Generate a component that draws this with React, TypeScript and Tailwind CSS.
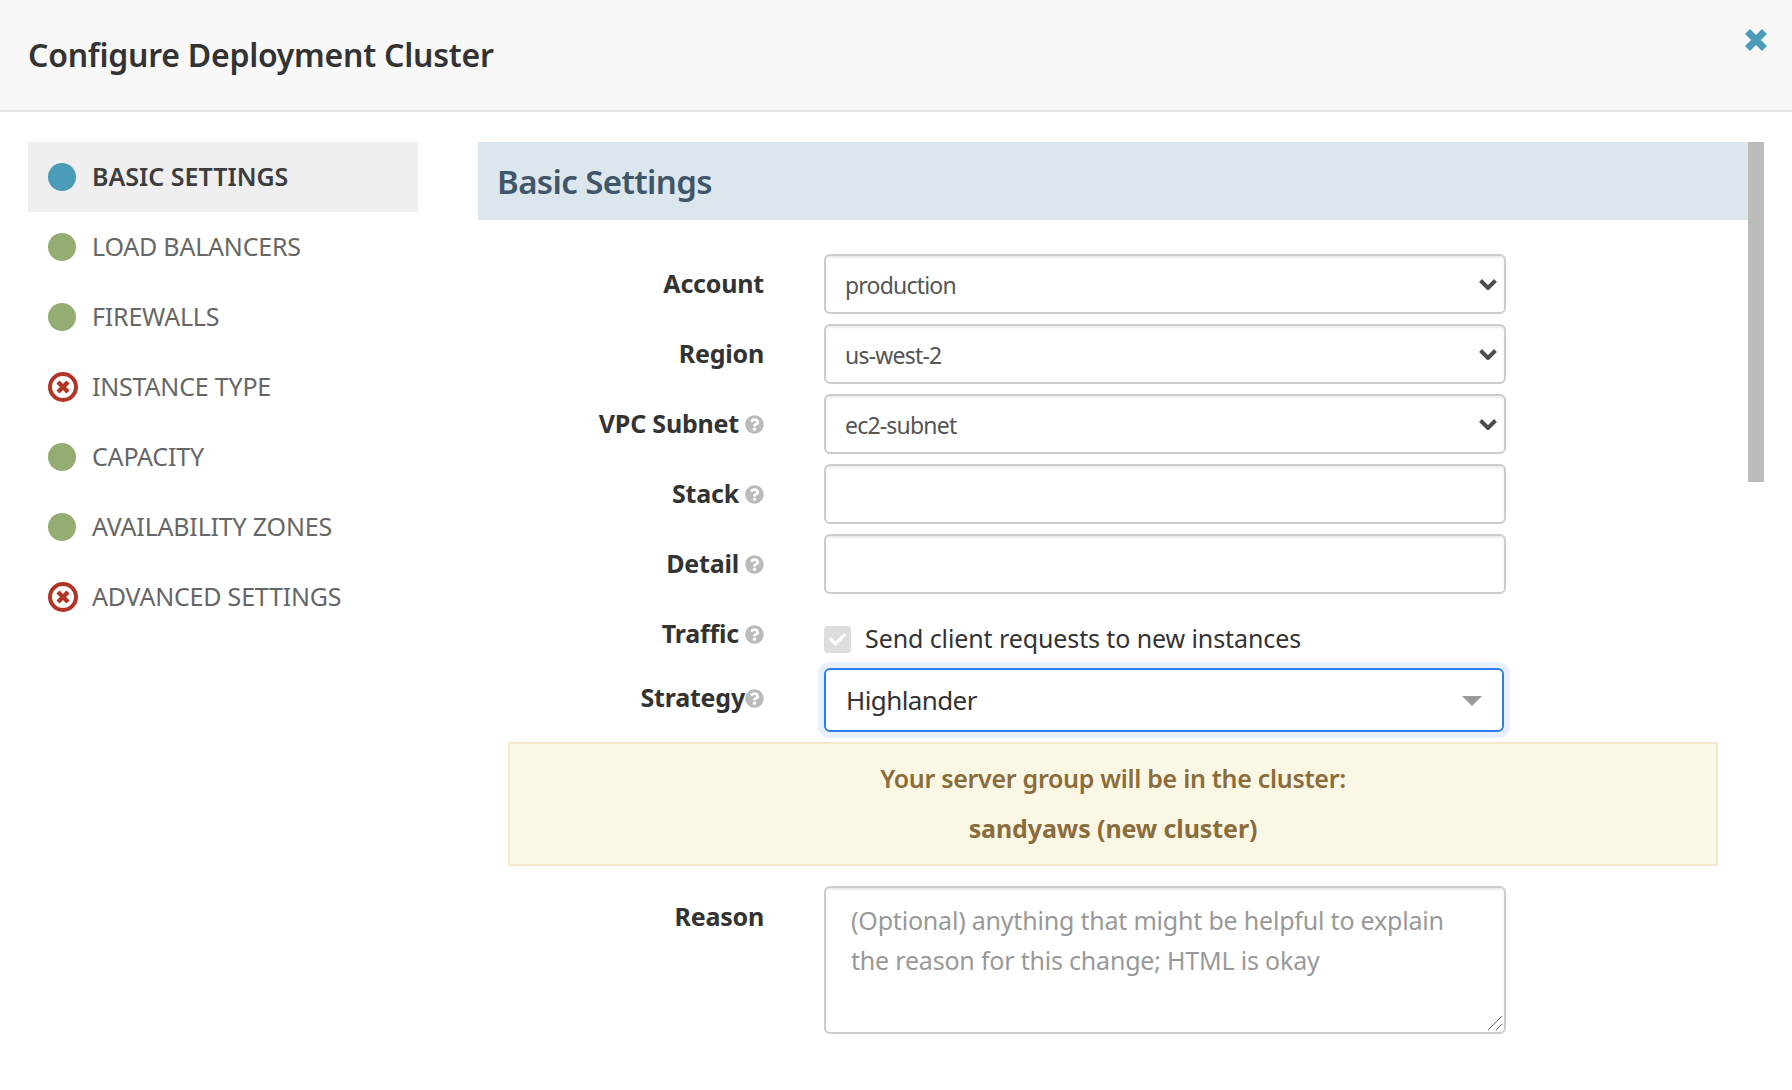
import React, { JSX } from 'react';
import { FaQuestionCircle, FaCheck } from 'react-icons/fa';

type Status = 'active' | 'ok' | 'error';

const sections: { label: string; status: Status }[] = [
  { label: 'BASIC SETTINGS', status: 'active' },
  { label: 'LOAD BALANCERS', status: 'ok' },
  { label: 'FIREWALLS', status: 'ok' },
  { label: 'INSTANCE TYPE', status: 'error' },
  { label: 'CAPACITY', status: 'ok' },
  { label: 'AVAILABILITY ZONES', status: 'ok' },
  { label: 'ADVANCED SETTINGS', status: 'error' },
];

function StatusIcon({ status }: { status: Status }): JSX.Element {
  if (status === 'error') {
    return (
      <svg width="30" height="30" viewBox="0 0 30 30" className="shrink-0">
        <circle cx="15" cy="15" r="13" fill="none" stroke="#b13426" strokeWidth="4" />
        <path d="M10 10L20 20M20 10L10 20" stroke="#b13426" strokeWidth="4.4" />
      </svg>
    );
  }
  return (
    <span
      className={`block w-[28px] h-[28px] rounded-full shrink-0 mr-[2px] ${
        status === 'active' ? 'bg-[#4a9cb8]' : 'bg-[#94ad72]'
      }`}
    />
  );
}

function FieldLabel({ label, help, tight }: { label: string; help?: boolean; tight?: boolean }): JSX.Element {
  return (
    <div
      className={`w-[286px] shrink-0 mr-[60px] flex items-center justify-end text-[25px] font-bold text-[#333] tracking-[-0.2px] ${
        tight ? 'pb-[4px]' : ''
      }`}
    >
      <span>{label}</span>
      {help && (
        <FaQuestionCircle className={`text-[#bbbbbb] text-[19px] shrink-0 ${tight ? 'ml-0' : 'ml-[6px]'}`} />
      )}
    </div>
  );
}

function SelectField({ value }: { value: string }): JSX.Element {
  return (
    <div className="relative w-[682px]">
      <select
        defaultValue={value}
        className="appearance-none w-full h-[60px] px-[19px] pt-[2px] border-2 border-[#cccccc] rounded-[6px] bg-white text-[23px] text-[#555] shadow-[inset_0_2px_2px_rgba(0,0,0,0.075)] tracking-[-0.8px]"
      >
        <option>{value}</option>
      </select>
      <svg width="18" height="12" viewBox="0 0 18 12" className="absolute right-[9px] top-[24px] pointer-events-none">
        <path d="M1.5 2.5L9 10L16.5 2.5" fill="none" stroke="#4d4d4d" strokeWidth="4" />
      </svg>
    </div>
  );
}

function TextField(): JSX.Element {
  return (
    <input
      type="text"
      className="block w-[682px] h-[60px] px-[20px] border-2 border-[#cccccc] rounded-[6px] bg-white shadow-[inset_0_2px_2px_rgba(0,0,0,0.075)]"
    />
  );
}

export default function App(): JSX.Element {
  return (
    <div className="w-[1792px] h-[1090px] overflow-hidden bg-white font-['Noto_Sans','Lato',sans-serif]">
      {/* Header */}
      <div className="relative h-[112px] bg-[#f8f8f8] border-b-2 border-[#e5e5e5] flex items-center pl-[28px]">
        <h1 className="text-[32px] font-semibold text-[#333] tracking-[-0.25px]">Configure Deployment Cluster</h1>
        <svg width="24" height="24" viewBox="0 0 24 24" className="absolute left-[1744px] top-[28px]">
          <path d="M3.5 3.5L20.5 20.5M20.5 3.5L3.5 20.5" stroke="#4a9cb8" strokeWidth="7" />
        </svg>
      </div>

      <div className="flex items-start pt-[30px] pl-[28px]">
        {/* Section nav */}
        <nav className="w-[390px] shrink-0 mr-[60px]">
          {sections.map((s) => (
            <div
              key={s.label}
              className={`h-[70px] pl-[20px] pb-[1px] flex items-center gap-[14px] text-[25px] ${
                s.status === 'active'
                  ? 'bg-[#efefef] font-semibold text-[#3d3d3d] tracking-[0px]'
                  : 'text-[#666] tracking-[-0.2px]'
              }`}
            >
              <StatusIcon status={s.status} />
              <span>{s.label}</span>
            </div>
          ))}
        </nav>

        {/* Form */}
        <div className="relative w-[1270px]">
          <div className="absolute left-[1270px] top-0 w-[16px] h-[340px] bg-[#bbbbbb]" />
          <h2 className="h-[78px] bg-[#dbe7ed] pl-[19px] pt-[1px] flex items-center text-[33px] font-semibold text-[#3f5569] tracking-[-0.6px]">
            Basic Settings
          </h2>

          <div className="pt-[34px] flex flex-col gap-[10px]">
            <div className="flex h-[60px]">
              <FieldLabel label="Account" />
              <SelectField value="production" />
            </div>
            <div className="flex h-[60px]">
              <FieldLabel label="Region" />
              <SelectField value="us-west-2" />
            </div>
            <div className="flex h-[60px]">
              <FieldLabel label="VPC Subnet" help />
              <SelectField value="ec2-subnet" />
            </div>
            <div className="flex h-[60px]">
              <FieldLabel label="Stack" help />
              <TextField />
            </div>
            <div className="flex h-[60px]">
              <FieldLabel label="Detail" help />
              <TextField />
            </div>
          </div>

          <div className="flex h-[60px] mt-[10px]">
            <FieldLabel label="Traffic" help />
            <div className="flex items-center gap-[14px] pt-[10px] text-[25px] text-[#333] tracking-[-0.1px]">
              <span className="w-[27px] h-[27px] rounded-[4px] bg-[#dddddd] flex items-center justify-center">
                <FaCheck className="text-white text-[17px]" />
              </span>
              Send client requests to new instances
            </div>
          </div>

          <div className="flex h-[64px] mt-[4px]">
            <FieldLabel label="Strategy" help tight />
            <div className="relative w-[680px] h-[64px] border-2 border-[#2f7ceb] rounded-[6px] bg-white shadow-[0_0_0_6px_#e8f0fe] flex items-center pl-[20px] text-[26px] text-[#333] tracking-[-0.6px]">
              Highlander
              <span className="absolute right-[20px] top-[26px] w-0 h-0 border-x-[10px] border-x-transparent border-t-[10px] border-t-[#999999]" />
            </div>
          </div>

          <div className="ml-[30px] mt-[10px] w-[1210px] h-[124px] pb-[2px] bg-[#fbf7e5] border-2 border-[#f7eacb] flex flex-col items-center justify-center gap-[20px] text-[25px] font-semibold text-[#8a6d3b] tracking-[-0.3px] leading-[30px]">
            <div>Your server group will be in the cluster:</div>
            <div className="font-bold tracking-[-0.1px]">sandyaws (new cluster)</div>
          </div>

          <div className="flex mt-[20px]">
            <div className="w-[286px] shrink-0 mr-[60px] text-right pt-[12px] text-[25px] font-bold text-[#333] tracking-[-0.2px]">
              Reason
            </div>
            <div className="relative">
              <textarea
                placeholder="(Optional) anything that might be helpful to explain the reason for this change; HTML is okay"
                className="block w-[682px] h-[148px] px-[25px] py-[12px] border-2 border-[#cccccc] rounded-[6px] text-[25px] leading-[40px] tracking-[-0.2px] placeholder:text-[#999999] shadow-[inset_0_2px_2px_rgba(0,0,0,0.075)] resize-none"
              />
              <svg width="16" height="16" viewBox="0 0 16 16" className="absolute right-[3px] bottom-[3px] pointer-events-none">
                <path d="M1 15L15 1M9 15L15 9" stroke="#666" strokeWidth="1" />
              </svg>
            </div>
          </div>
        </div>
      </div>
    </div>
  );
}
